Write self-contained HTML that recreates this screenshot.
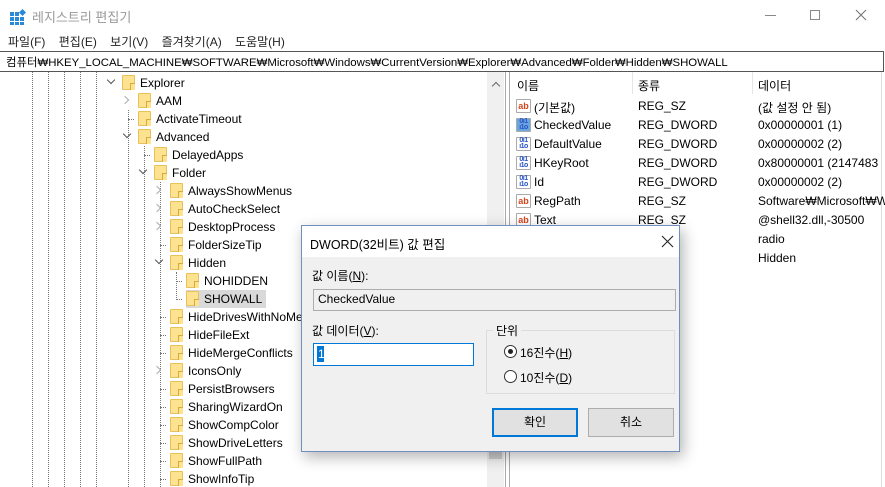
<!DOCTYPE html>
<html><head><meta charset="utf-8"><style>
*{box-sizing:border-box;margin:0;padding:0}
body{width:885px;height:487px;overflow:hidden;background:#fff;font-family:"Liberation Sans","Noto Sans CJK KR",sans-serif;font-size:12px;color:#000;position:relative}
.a{position:absolute;white-space:nowrap}
.fold{position:absolute;width:13px;height:15px;background:#fde38f;border:1px solid #e8c15a;border-radius:1px}
.fold:after{content:"";position:absolute;right:-1px;bottom:-1px;width:4px;height:6px;border-left:1px solid #d9a93c;border-top:1px solid #d9a93c;background:#fde38f}
.dv{position:absolute;width:0;border-left:1px dotted #777}
.dh{position:absolute;height:0;width:6px;border-top:1px dotted #777}
.arr{position:absolute;width:6px;height:6px;border-right:1.5px solid #555;border-bottom:1.5px solid #555}
.ic{position:absolute;width:15px;height:14px;font-size:9px;font-weight:bold;line-height:12px;text-align:center;border:1px solid #aaa;border-radius:1px;background:#fff}
.ab{color:#d4441c}
.bin{color:#2953c6;font-size:7px;line-height:6px;letter-spacing:-0.5px}
u{text-decoration:underline}
</style></head><body>
<!-- title -->
<div class="a" style="left:10px;top:9px;width:15px;height:15px">
<svg width="16" height="16"><g fill="#2a8ad8"><rect x="0" y="3" width="4" height="4"/><rect x="5" y="3" width="4" height="4"/><rect x="0" y="8" width="4" height="4"/><rect x="5" y="8" width="4" height="4"/><rect x="10" y="8" width="4" height="4"/><rect x="0" y="13" width="4" height="3"/><rect x="5" y="13" width="4" height="3"/><rect x="10" y="13" width="4" height="3"/><rect x="10" y="1" width="5" height="5" transform="rotate(45 12.5 3.5)"/></g></svg></div>
<div class="a" style="left:32px;top:7px;font-size:13px;color:#999">레지스트리 편집기</div>
<div class="a" style="left:765px;top:15px;width:11px;border-top:1px solid #888"></div>
<div class="a" style="left:810px;top:10px;width:10px;height:10px;border:1px solid #888"></div>
<svg class="a" style="left:855px;top:9px" width="12" height="12"><path d="M1 1L11 11M11 1L1 11" stroke="#777" stroke-width="1.1"/></svg>
<!-- menu -->
<div class="a" style="left:8px;top:33px;font-size:12px;color:#222">파일(F)&nbsp;&nbsp;&nbsp;&nbsp;편집(E)&nbsp;&nbsp;&nbsp;&nbsp;보기(V)&nbsp;&nbsp;&nbsp;&nbsp;즐겨찾기(A)&nbsp;&nbsp;&nbsp;&nbsp;도움말(H)</div>
<!-- address -->
<div class="a" style="left:0;top:51px;width:884px;height:21px;border:1px solid #555;border-left:none"></div>
<div class="a" style="left:6px;top:54px;font-size:11.4px">컴퓨터₩HKEY_LOCAL_MACHINE₩SOFTWARE₩Microsoft₩Windows₩CurrentVersion₩Explorer₩Advanced₩Folder₩Hidden₩SHOWALL</div>
<!-- tree -->
<div class="dv" style="left:32px;top:72px;height:415px"></div>
<div class="dv" style="left:48px;top:72px;height:415px"></div>
<div class="dv" style="left:64px;top:72px;height:415px"></div>
<div class="dv" style="left:80px;top:72px;height:415px"></div>
<div class="dv" style="left:96px;top:72px;height:415px"></div>
<div class="dv" style="left:128px;top:110px;height:377px"></div>
<div class="dv" style="left:144px;top:146px;height:341px"></div>
<div class="dv" style="left:160px;top:182px;height:305px"></div>
<div class="dv" style="left:176px;top:272px;height:28px"></div>
<div class="a" style="left:186px;top:290px;width:80px;height:18px;background:#d9d9d9"></div>
<div id="tree"></div>
<!-- tree scrollbar -->
<div class="a" style="left:487px;top:72px;width:17px;height:415px;background:#f0f0f0"></div>
<div class="a" style="left:493px;top:83px;width:6px;height:6px;border-left:1.5px solid #666;border-top:1.5px solid #666;transform:rotate(45deg)"></div>
<div class="a" style="left:489px;top:445px;width:13px;height:14px;background:#cdcdcd"></div>
<div class="a" style="left:505px;top:72px;width:5px;height:415px;border-left:1px solid #aaa;border-right:1px solid #aaa;background:#fff"></div>
<!-- list header -->
<div class="a" style="left:517px;top:77px">이름</div>
<div class="a" style="left:638px;top:77px">종류</div>
<div class="a" style="left:758px;top:77px">데이터</div>
<div class="a" style="left:632px;top:72px;height:22px;border-left:1px solid #e5e5e5"></div>
<div class="a" style="left:752px;top:72px;height:22px;border-left:1px solid #e5e5e5"></div>
<div class="a" style="left:881px;top:72px;height:415px;border-left:1px solid #ddd"></div>
<div id="list"></div>
<!-- dialog -->
<div class="a" style="left:301px;top:225px;width:379px;height:227px;background:#f0f0f0;border:1px solid #6f8fbf;box-shadow:3px 5px 14px rgba(0,0,0,0.3)">
 <div class="a" style="left:0;top:0;width:377px;height:31px;background:#fff"></div>
 <div class="a" style="left:8px;top:8px;font-size:12.5px">DWORD(32비트) 값 편집</div>
 <svg class="a" style="left:359px;top:9px" width="13" height="13"><path d="M1 1L12 12M12 1L1 12" stroke="#222" stroke-width="1.1"/></svg>
 <div class="a" style="left:10px;top:41px">값 이름(<u>N</u>):</div>
 <div class="a" style="left:11px;top:63px;width:363px;height:22px;border:1px solid #adadad;background:#f0f0f0;padding:2px 4px">CheckedValue</div>
 <div class="a" style="left:10px;top:96px">값 데이터(<u>V</u>):</div>
 <div class="a" style="left:11px;top:117px;width:161px;height:23px;border:1px solid #0078d7;background:#fff"></div>
 <div class="a" style="left:15px;top:120px;width:7px;height:16px;background:#0078d7;color:#fff;line-height:16px;padding-left:1px">1</div>
 <div class="a" style="left:184px;top:104px;width:189px;height:64px;border:1px solid #dcdcdc"></div>
 <div class="a" style="left:191px;top:96px;background:#f0f0f0;padding:0 3px">단위</div>
 <div class="a" style="left:202px;top:119px;width:13px;height:13px;border:1px solid #333;border-radius:50%;background:#fff"></div>
 <div class="a" style="left:206px;top:123px;width:5px;height:5px;border-radius:50%;background:#222"></div>
 <div class="a" style="left:218px;top:118px">16진수(<u>H</u>)</div>
 <div class="a" style="left:202px;top:144px;width:13px;height:13px;border:1px solid #333;border-radius:50%;background:#fff"></div>
 <div class="a" style="left:218px;top:143px">10진수(<u>D</u>)</div>
 <div class="a" style="left:190px;top:182px;width:86px;height:29px;border:2px solid #0078d7;background:#e1e1e1;text-align:center;line-height:25px">확인</div>
 <div class="a" style="left:286px;top:182px;width:86px;height:29px;border:1px solid #adadad;background:#e1e1e1;text-align:center;line-height:27px">취소</div>
</div>
<script>
var rows=[[0,"Explorer","v"],[1,"AAM",">"],[1,"ActivateTimeout",""],[1,"Advanced","v"],[2,"DelayedApps",""],[2,"Folder","v"],[3,"AlwaysShowMenus",">"],[3,"AutoCheckSelect",">"],[3,"DesktopProcess",">"],[3,"FolderSizeTip",""],[3,"Hidden","v"],[4,"NOHIDDEN",""],[4,"SHOWALL",""],[3,"HideDrivesWithNoMedia",""],[3,"HideFileExt",""],[3,"HideMergeConflicts",""],[3,"IconsOnly",">"],[3,"PersistBrowsers",""],[3,"SharingWizardOn",""],[3,"ShowCompColor",""],[3,"ShowDriveLetters",""],[3,"ShowFullPath",""],[3,"ShowInfoTip",""]];
var h="";
rows.forEach(function(r,i){var y=74+i*18,x=122+r[0]*16;
 if(r[2]=="v")h+='<div class="arr" style="left:'+(x-14)+'px;top:'+(y+3)+'px;transform:rotate(45deg)"></div>';
 else if(r[2]==">")h+='<div class="arr" style="left:'+(x-16)+'px;top:'+(y+5)+'px;transform:rotate(-45deg);border-color:#aaa"></div>';
 else h+='<div class="dh" style="left:'+(x-10)+'px;top:'+(y+9)+'px"></div>';
 h+='<div class="fold" style="left:'+x+'px;top:'+(y+1)+'px"></div><div class="a" style="left:'+(x+18)+'px;top:'+(y+2)+'px">'+r[1]+'</div>';});
document.getElementById("tree").innerHTML=h;
var L=[["ab","(기본값)","REG_SZ","(값 설정 안 됨)"],["b","CheckedValue","REG_DWORD","0x00000001 (1)"],["b","DefaultValue","REG_DWORD","0x00000002 (2)"],["b","HKeyRoot","REG_DWORD","0x80000001 (2147483"],["b","Id","REG_DWORD","0x00000002 (2)"],["ab","RegPath","REG_SZ","Software₩Microsoft₩W"],["ab","Text","REG_SZ","@shell32.dll,-30500"],["ab","","","radio"],["ab","","","Hidden"]];
h="";L.forEach(function(r,i){var y=99+i*19;
 if(r[1]){h+=r[0]=="ab"?'<div class="ic ab" style="left:516px;top:'+(y)+'px">ab</div>':'<div class="ic bin" style="left:516px;top:'+y+'px;'+(i==1?'background:#6aa5e0;':'')+'">0ı1<br>ı1o</div>';
 h+='<div class="a" style="left:534px;top:'+(y)+'px">'+r[1]+'</div><div class="a" style="left:638px;top:'+y+'px">'+r[2]+'</div>';}
 h+='<div class="a" style="left:758px;top:'+y+'px">'+r[3]+'</div>';});
document.getElementById("list").innerHTML=h;
</script>
</body></html>
